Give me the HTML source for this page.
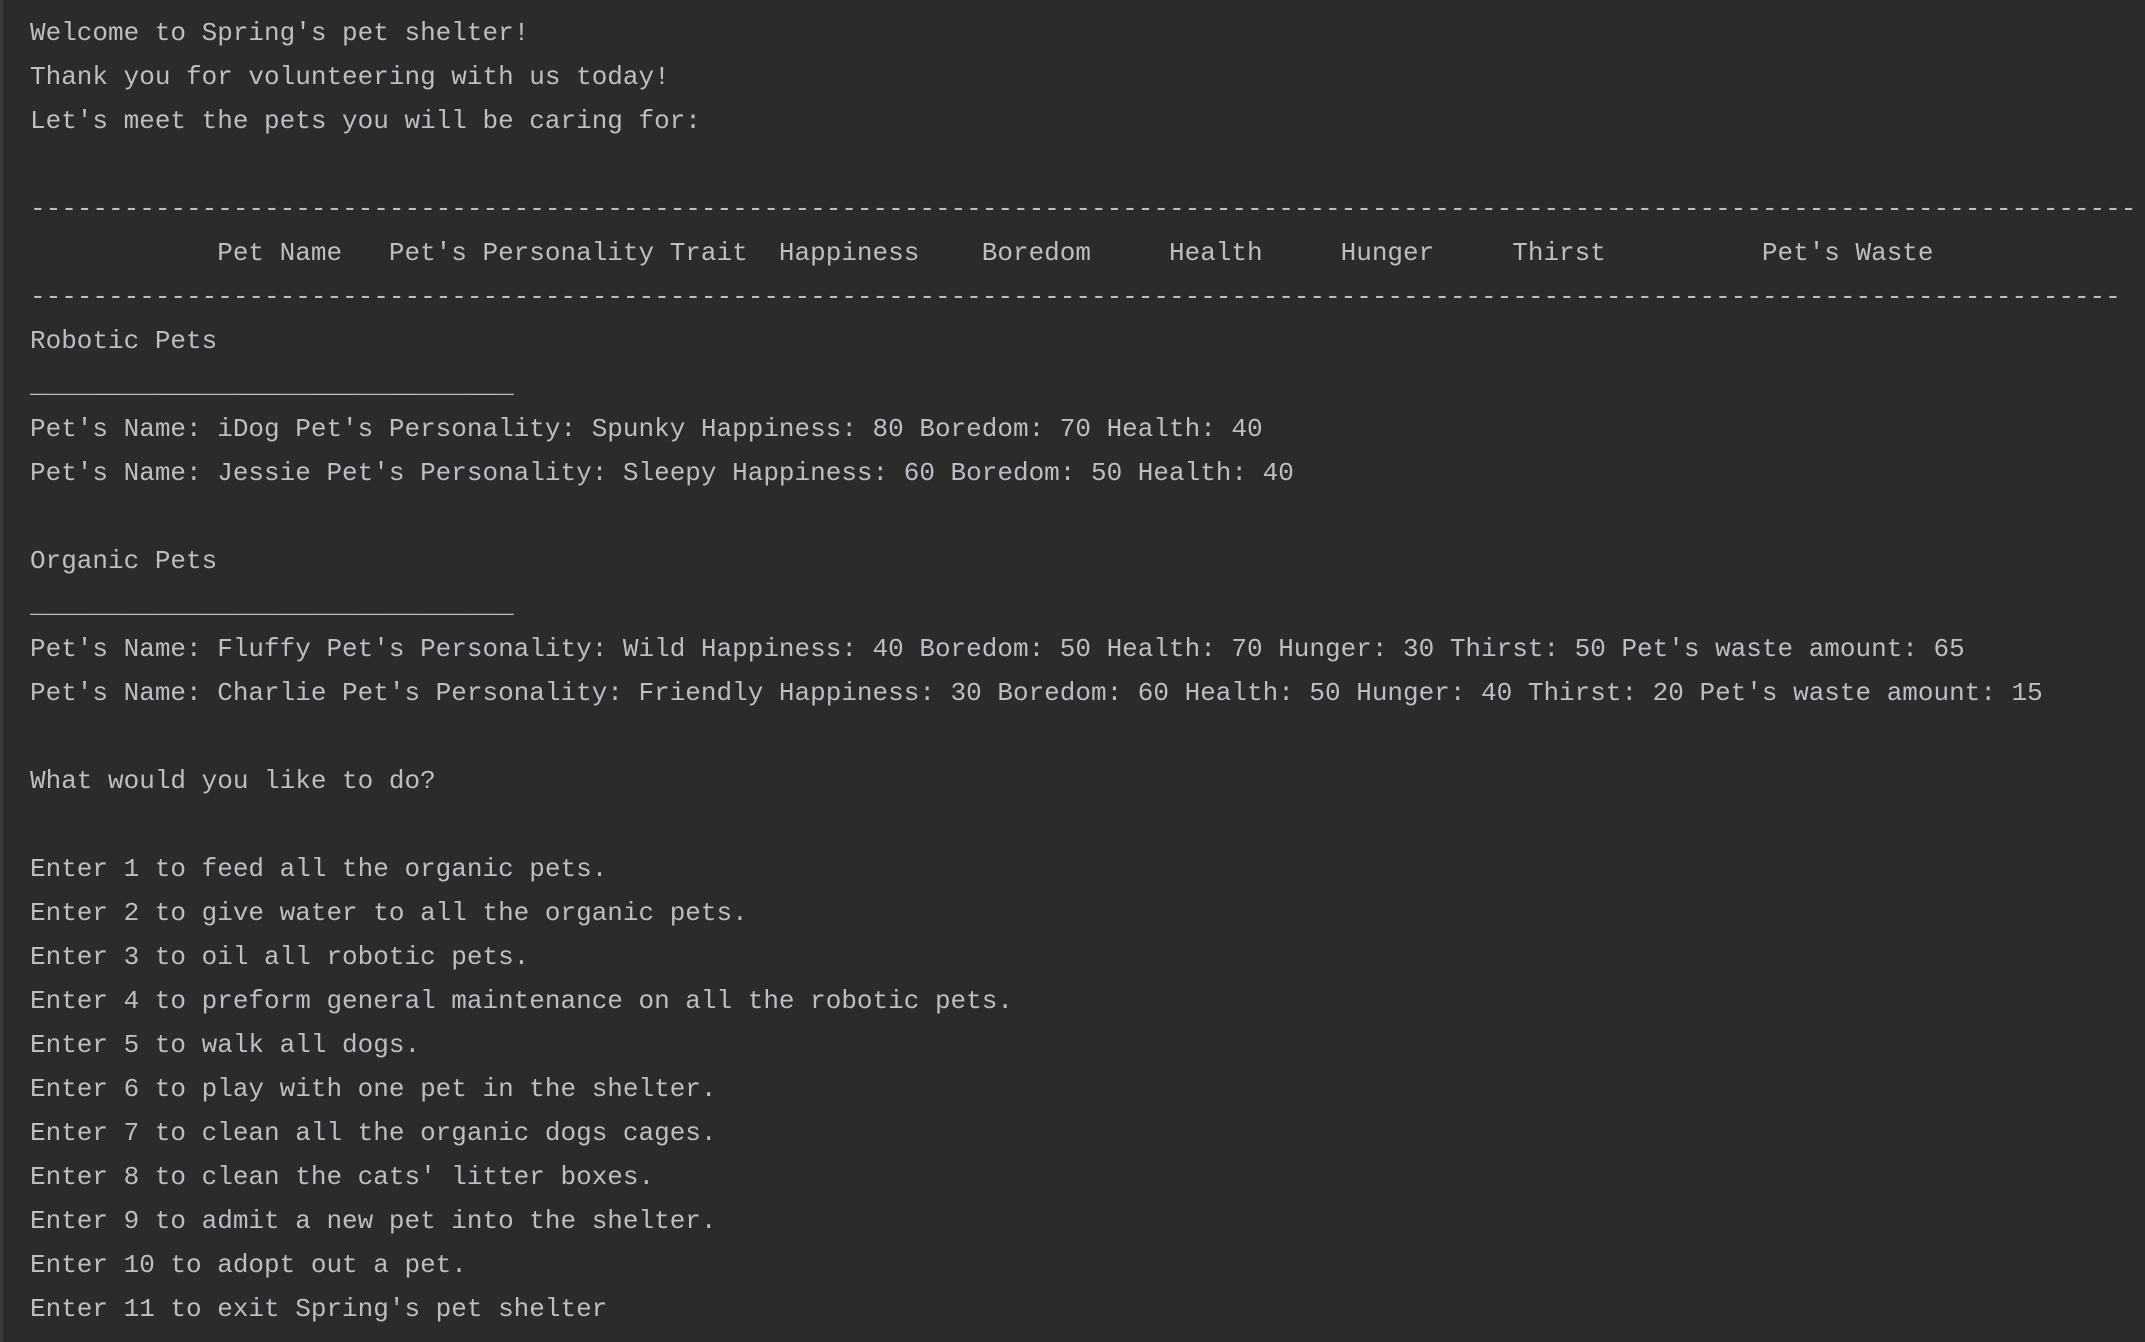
<!DOCTYPE html>
<html><head><meta charset="utf-8"><style>
html,body{margin:0;padding:0;background:#2b2b2b;width:2145px;height:1342px;overflow:hidden}
.b{position:absolute;left:0;top:0;width:3px;height:1342px;background:#3a3c3e}
pre{margin:0;position:absolute;left:30px;top:11px;font-family:"Liberation Mono",monospace;font-size:26px;line-height:44px;color:#bcbec4;white-space:pre}
</style></head><body><div class="b"></div><pre>Welcome to Spring's pet shelter!
Thank you for volunteering with us today!
Let's meet the pets you will be caring for:

---------------------------------------------------------------------------------------------------------------------------------------
            Pet Name   Pet's Personality Trait  Happiness    Boredom     Health     Hunger     Thirst          Pet's Waste
--------------------------------------------------------------------------------------------------------------------------------------
Robotic Pets
_______________________________
Pet's Name: iDog Pet's Personality: Spunky Happiness: 80 Boredom: 70 Health: 40
Pet's Name: Jessie Pet's Personality: Sleepy Happiness: 60 Boredom: 50 Health: 40

Organic Pets
_______________________________
Pet's Name: Fluffy Pet's Personality: Wild Happiness: 40 Boredom: 50 Health: 70 Hunger: 30 Thirst: 50 Pet's waste amount: 65
Pet's Name: Charlie Pet's Personality: Friendly Happiness: 30 Boredom: 60 Health: 50 Hunger: 40 Thirst: 20 Pet's waste amount: 15

What would you like to do?

Enter 1 to feed all the organic pets.
Enter 2 to give water to all the organic pets.
Enter 3 to oil all robotic pets.
Enter 4 to preform general maintenance on all the robotic pets.
Enter 5 to walk all dogs.
Enter 6 to play with one pet in the shelter.
Enter 7 to clean all the organic dogs cages.
Enter 8 to clean the cats' litter boxes.
Enter 9 to admit a new pet into the shelter.
Enter 10 to adopt out a pet.
Enter 11 to exit Spring's pet shelter</pre></body></html>
